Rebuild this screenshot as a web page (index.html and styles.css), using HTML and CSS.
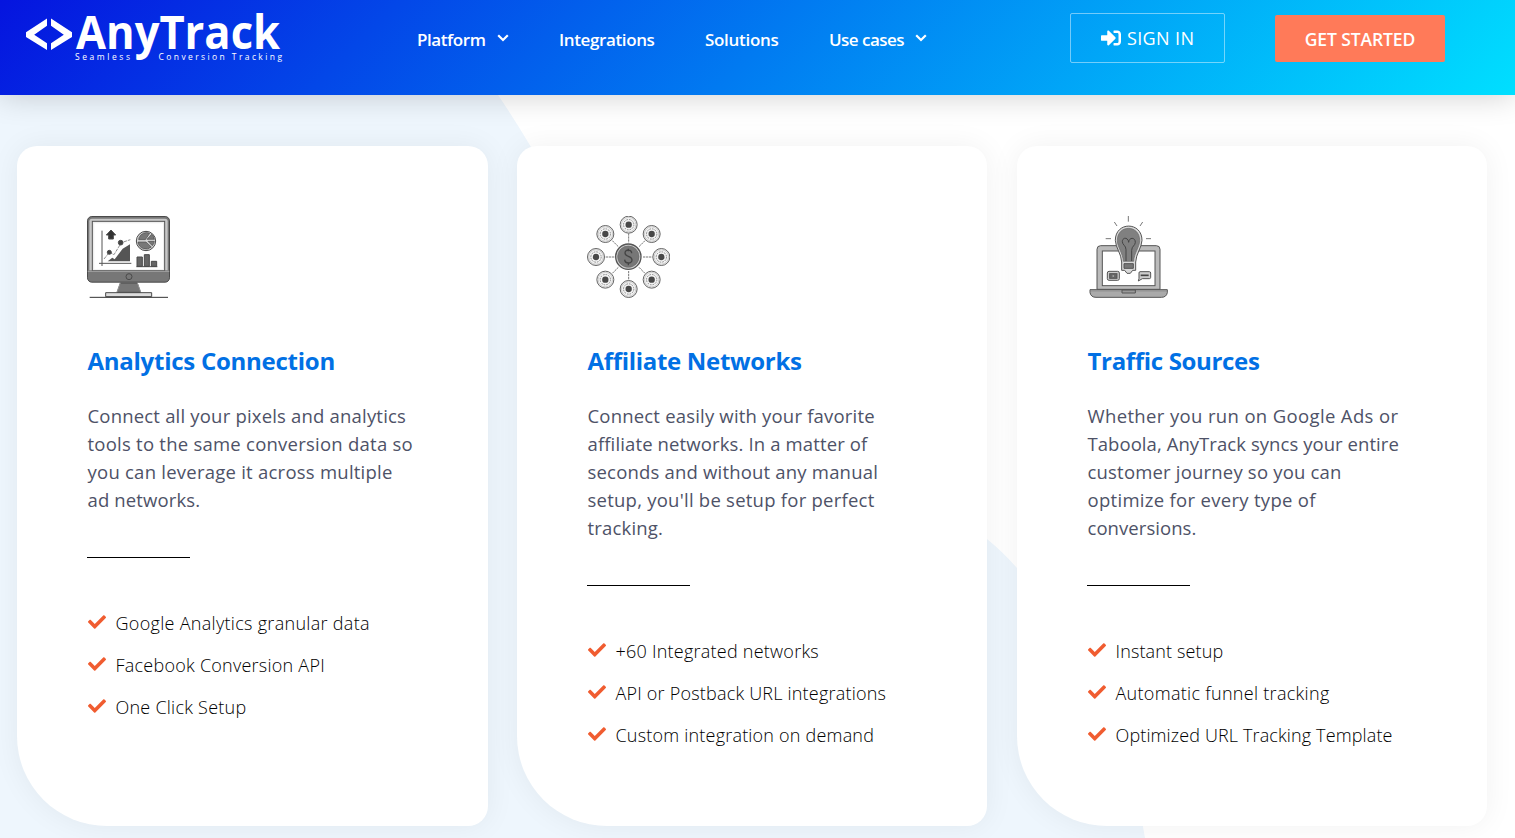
FILE: index.html
```
<!DOCTYPE html>
<html lang="en">
<head>
<meta charset="utf-8">
<title>AnyTrack</title>
<link rel="stylesheet" href="styles.css">
</head>
<body>
<svg class="defs" aria-hidden="true">
  <defs>
    <symbol id="check" viewBox="0 0 512 512"><path d="M173.9 439.4L7.5 273c-10-10-10-26.200 0-36.200l36.200-36.200c10-10 26.200-10 36.200 0L192 312.700 432.100 72.600c10-10 26.200-10 36.200 0l36.200 36.200c10 10 10 26.200 0 36.200L210.100 439.400c-10 10-26.200 10-36.200 0z"/></symbol>
    <symbol id="chevron" viewBox="0 0 12 8"><path d="M1.200 1.200L6 6l4.800-4.800" fill="none" stroke="currentColor" stroke-width="2.200"/></symbol>
    <g id="coin">
      <circle r="25.500" fill="#eee" stroke="#666" stroke-width="3"/>
      <circle r="21.500" fill="#f4f4f4" stroke="#aaa" stroke-width="1.500"/>
      <circle r="15.500" fill="none" stroke="#777" stroke-width="2.500" stroke-dasharray="5 3"/>
      <circle r="9.500" fill="#484848"/>
    </g>
  </defs>
</svg>
<header class="header">
  <a class="logo">
    <svg width="262" height="85" viewBox="24 0 262 85">
      <path d="M47 18.500v7.200L34.200 34.700 47 43.300v6.700L26 37v-4.800z M51 18.500v7.200L63.800 34.700 51 43.300v6.700L72 37v-4.800z" fill="#fff"/>
      <text class="logo-name" x="76" y="49" textLength="204" lengthAdjust="spacingAndGlyphs">AnyTrack</text>
      <text class="logo-tag" x="75" y="60" textLength="55">Seamless</text>
      <text class="logo-tag" x="158.500" y="60" textLength="123.500">Conversion Tracking</text>
    </svg>
  </a>
  <nav class="nav">
    <a class="nav-item nav-platform"><span>Platform</span><svg class="chevron"><use href="#chevron"/></svg></a>
    <a class="nav-item nav-integrations"><span>Integrations</span></a>
    <a class="nav-item nav-solutions"><span>Solutions</span></a>
    <a class="nav-item nav-cases"><span>Use cases</span><svg class="chevron"><use href="#chevron"/></svg></a>
  </nav>
  <a class="signin">
    <svg class="signin-icon" viewBox="0 0 512 512"><path fill="currentColor" d="M416 448h-84c-6.600 0-12-5.400-12-12v-40c0-6.600 5.400-12 12-12h84c17.700 0 32-14.300 32-32V160c0-17.700-14.300-32-32-32h-84c-6.600 0-12-5.400-12-12V76c0-6.600 5.400-12 12-12h84c53 0 96 43 96 96v192c0 53-43 96-96 96zm-47-209L201 71c-15-15-41-4.500-41 17v96H24c-13.300 0-24 10.700-24 24v96c0 13.300 10.700 24 24 24h136v96c0 21.500 26 32 41 17l168-168c9.300-9.400 9.300-24.600 0-34z"/></svg>
    <span>SIGN IN</span>
  </a>
  <a class="cta">GET STARTED</a>
</header>
<main class="features">
  <svg class="blob" viewBox="0 95 1515 743" preserveAspectRatio="none"><path d="M0 95H498Q515 120 531 147C610 280 780 390 987 539Q1003 552 1017 568C1095 650 1130 745 1145 838H0z" fill="#eef6fd"/></svg>
  <article class="card">
    <svg class="icon" viewBox="30 30 249 249">
      <g stroke="#4a4a4a" stroke-width="3" fill="#777">
        <rect x="31.500" y="31.500" width="246" height="197" rx="13" fill="#777"/>
        <path d="M45 38h219q8 0 8 8v147H37V46q0-8 8-8z" fill="#c8c8c8" stroke="none"/>
        <rect x="46" y="46" width="217" height="148" fill="#eee" stroke="#555"/>
        <rect x="52" y="52" width="206" height="138" fill="#fff" stroke="none"/>
        <path d="M32 196H277" stroke="#bbb" stroke-width="2"/>
        <circle cx="156" cy="212" r="9"/>
        <path d="M130 231h51l10 28h-71z"/>
        <path d="M130 231l-10 28M181 231l10 28" stroke="#bbb" stroke-width="2"/>
        <path d="M86 272v-12h138v12z" fill="#ddd"/>
        <path d="M38 274H273" stroke="#333"/>
        <path d="M75 74V180M66 172H163" fill="none" stroke="#555"/>
        <path d="M102 72l14 15h-7v12H95V87h-7z" fill="#333"/>
        <path d="M92 166l14-11 7 5 24-32 22-13v51z" fill="#555" stroke="none"/>
        <path d="M81 159l16-20 14 7 22-36 27-9" fill="none" stroke="#777" stroke-width="2.500" stroke-dasharray="10 3"/>
        <circle cx="97" cy="139" r="6" fill="#444"/><circle cx="131" cy="110" r="7" fill="#444"/>
        <circle cx="207" cy="105" r="29" fill="#d8d8d8"/>
        <path d="M205 101l13-19a24 24 0 0 0-32 13l-1 6z" stroke-width="2"/>
        <path d="M210 100l14-15q7 6 8 15z" stroke-width="2"/>
        <path d="M183 108h24l16 15a24 24 0 0 1-40-15z" stroke-width="2"/>
        <path d="M213 106h19q-1 8-6 13z" stroke-width="2"/>
        <path d="M180 153h16v28h-16zM202 146h15v35h-15zM223 166h16v15h-16z" fill="#666"/>
        <path d="M178 182H241"/>
      </g>
    </svg>
    <h3 class="title title-a">Analytics Connection</h3>
    <p class="text">Connect all your pixels and analytics<br><span class="wide">tools to the same conversion data so</span><br><span class="wide">you can leverage it across multiple</span><br><span class="snug">ad networks.</span></p>
    <div class="divider"></div>
    <ul class="list">
      <li><svg class="check"><use href="#check"/></svg><span class="wider">Google Analytics granular data</span></li>
      <li><svg class="check"><use href="#check"/></svg><span class="wide">Facebook Conversion API</span></li>
      <li><svg class="check"><use href="#check"/></svg><span class="wide">One Click Setup</span></li>
    </ul>
  </article>
  <article class="card">
    <svg class="icon" viewBox="30 30 249 249">
      <path d="M155 82v28M155 195v28M86 153h28M198 153h28M106 104l18 18M186 184l18 18M204 104l-18 18M124 184l-18 18" stroke="#777" stroke-width="3" stroke-dasharray="7 2"/>
      <use href="#coin" x="155" y="56"/><use href="#coin" x="224" y="84"/><use href="#coin" x="253" y="153"/><use href="#coin" x="224" y="221"/>
      <use href="#coin" x="155" y="249"/><use href="#coin" x="85" y="221"/><use href="#coin" x="57" y="153"/><use href="#coin" x="85" y="84"/>
      <circle cx="154" cy="152" r="38" fill="#ccc" stroke="#555" stroke-width="4"/>
      <circle cx="154" cy="152" r="32" fill="#777" stroke="#666" stroke-width="2"/>
      <path d="M164 142c0-13-20-13-20-1 0 13 21 7 21 21 0 12-21 12-22-1M154 128v8M154 170v8" fill="none" stroke="#444" stroke-width="4"/>
    </svg>
    <h3 class="title title-b">Affiliate Networks</h3>
    <p class="text">Connect easily with your favorite<br><span class="snug">affiliate networks. In a matter of</span><br>seconds and without any manual<br><span class="wide">setup, you'll be setup for perfect</span><br>tracking.</p>
    <div class="divider"></div>
    <ul class="list">
      <li><svg class="check"><use href="#check"/></svg><span class="wide">+60 Integrated networks</span></li>
      <li><svg class="check"><use href="#check"/></svg><span>API or Postback URL integrations</span></li>
      <li><svg class="check"><use href="#check"/></svg><span>Custom integration on demand</span></li>
    </ul>
  </article>
  <article class="card">
    <svg class="icon" viewBox="30 30 249 249">
      <g fill="none" stroke="#555" stroke-width="3">
        <path d="M154 30v17M112 48l8 12M197 48l-8 12M86 98h16M207 98h15" stroke="#777"/>
        <path d="M60 250V130q0-11 11-11h167q11 0 11 11v120z" fill="#bbb"/>
        <rect x="76" y="135" width="158" height="104" fill="#fff"/>
        <path d="M39 251h232v9q-3 14-18 14H57q-15 0-18-14z" fill="#aaa"/>
        <path d="M39 255H271" stroke="#888" stroke-width="2"/>
        <path d="M135 252h40v9h-40z" fill="#999"/>
        <path d="M134 168c-1-25-18-42-19-65 0-57 80-57 80 0-1 23-18 40-19 65v25h-9l-7 9h-10l-7-9h-9z" fill="#d8d8d8"/>
        <path d="M139 166c-1-25-18-42-18-63 0-48 67-48 67 0 0 21-17 38-18 63z" fill="#808080" stroke="#666" stroke-width="2"/>
        <path d="M147 165v-34c0-13-11-14-11-24 0-14 18-14 19 2 1-16 20-16 20 0 0 10-11 11-11 24v32" stroke="#444"/>
        <path d="M141 173h28v14h-28z" fill="#777"/>
        <rect x="91" y="196" width="36" height="27" rx="5" fill="#ccc"/>
        <rect x="98" y="203" width="22" height="14" fill="#666"/><path d="M107 206l5 4-5 4z" fill="#bbb" stroke="none"/>
        <path d="M189 197h28q4 0 4 4v13q0 4-4 4h-21l-12 7 2-8V201q0-4 3-4z" fill="#ccc"/>
        <path d="M191 208h24" stroke="#444" stroke-width="5"/>
      </g>
    </svg>
    <h3 class="title title-c">Traffic Sources</h3>
    <p class="text"><span class="widest">Whether you run on Google Ads or</span><br><span class="tight">Taboola, AnyTrack syncs your entire</span><br>customer journey so you can<br><span class="wider">optimize for every type of</span><br><span class="tight">conversions.</span></p>
    <div class="divider"></div>
    <ul class="list">
      <li><svg class="check"><use href="#check"/></svg><span class="snug">Instant setup</span></li>
      <li><svg class="check"><use href="#check"/></svg><span class="wider">Automatic funnel tracking</span></li>
      <li><svg class="check"><use href="#check"/></svg><span class="snug">Optimized URL Tracking Template</span></li>
    </ul>
  </article>
</main>
</body>
</html>
```
FILE: styles.css
```
* { box-sizing: border-box; }
body {
  margin: 0;
  height: 838px;
  overflow: hidden;
  background: #fff;
  font-family: "Open Sans", "Noto Sans", sans-serif;
  white-space: nowrap;
}
.defs { position: absolute; width: 0; height: 0; }
.header {
  position: relative;
  z-index: 2;
  display: flex;
  align-items: flex-start;
  height: 95px;
  padding-left: 24px;
  color: #fff;
  background: linear-gradient(135deg, #0514df 0%, #017af1 50%, #00dfff 100%);
  box-shadow: 0 0 30px rgba(0, 0, 0, .2);
}
.logo { width: 393px; }
.logo svg { display: block; overflow: visible; }
.logo-name { font-size: 46px; font-weight: 700; fill: #fff; }
.logo-tag { font-size: 8.500px; font-weight: 500; fill: #fff; }
.nav { display: flex; gap: 50px; width: 653px; padding-top: 28px; }
.nav-item { display: flex; font-size: 17px; font-weight: 620; line-height: 24px; }
.nav-platform { width: 92px; letter-spacing: -.42px; }
.nav-integrations { width: 96px; letter-spacing: -.38px; }
.nav-solutions { width: 74px; letter-spacing: -.3px; }
.nav-cases { letter-spacing: -.52px; }
.chevron { width: 12px; height: 8px; margin: 6px 0 0 11px; }
.signin {
  display: flex;
  align-items: center;
  gap: 6px;
  width: 155px;
  height: 50px;
  margin-top: 13px;
  padding-left: 30px;
  border: 1px solid rgba(255, 255, 255, .45);
  border-radius: 2px;
  font-size: 18px;
  letter-spacing: .36px;
}
.signin-icon { width: 20px; height: 20px; }
.cta {
  width: 170px;
  height: 47px;
  margin: 15px 0 0 50px;
  border-radius: 2px;
  background: #ff7a59;
  font-size: 17.500px;
  font-weight: 600;
  line-height: 49px;
  letter-spacing: -.1px;
  text-align: center;
}
.features {
  position: relative;
  display: grid;
  grid-template-columns: 471px 470px 470px;
  justify-content: space-between;
  height: 743px;
  padding: 51px 28px 12px 17px;
  column-gap: 29px;
}
.blob { position: absolute; inset: 0; width: 100%; height: 100%; }
.card {
  position: relative;
  height: 680px;
  padding: 70px;
  border-radius: 20px 20px 20px 90px;
  background: #fff;
  box-shadow: 0 0 30px rgba(0, 0, 0, .06);
}
.card:nth-of-type(2) { margin: 0 .5px 0 -.5px; }
.icon { display: block; width: 83px; height: 83px; }
.title { margin: 47px 0 26px .5px; color: #0170e4; font-size: 24px; font-weight: 700; line-height: 30px; }
.title-a { letter-spacing: -.26px; }
.title-b { letter-spacing: -.31px; }
.title-c { letter-spacing: -.33px; }
.text { margin: 0 0 0 .5px; color: #4e5267; font-size: 18.500px; line-height: 28px; letter-spacing: .19px; }
.tight { letter-spacing: .06px; }
.snug { letter-spacing: .13px; }
.wide { letter-spacing: .24px; }
.wider { letter-spacing: .3px; }
.widest { letter-spacing: .36px; }
.divider { width: 103px; height: 1px; margin-top: 43px; background: #000; }
.list { margin: 44px 0 0; padding: 0; list-style: none; color: #000; font-size: 18px; font-weight: 330; letter-spacing: .2px; }
.list li { display: flex; align-items: center; height: 42px; }
.check { width: 18px; height: 18px; margin: -2px 10px 0 .5px; fill: #f05c30; }
```
